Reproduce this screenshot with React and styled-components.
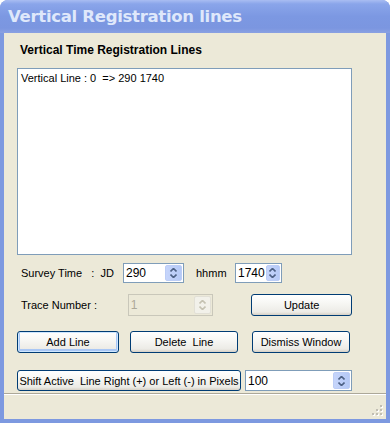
import React from "react";
import styled, { createGlobalStyle } from "styled-components";

const GlobalStyle = createGlobalStyle`
  html, body {
    margin: 0;
    padding: 0;
    background: #ffffff;
  }
  body {
    font-family: "Liberation Sans", Arial, sans-serif;
    font-size: 11px;
    color: #000;
  }
`;

const Window = styled.div`
  width: 390px;
  height: 423px;
  box-sizing: border-box;
  display: flex;
  flex-direction: column;
  background: #7d99e0;
  border-radius: 8px 8px 0 0;
  overflow: hidden;
`;

const TitleBar = styled.div`
  height: 33px;
  flex: none;
  display: flex;
  align-items: center;
  padding-left: 8px;
  background: linear-gradient(to bottom, #a9bdf2 0%, #8aa5ea 12%, #7c98e2 50%, #7b96e0 85%, #8aa1e2 100%);
  color: #dfe8fb;
  font-family: "DejaVu Sans", Verdana, sans-serif;
  font-weight: bold;
  font-size: 16.5px;
  letter-spacing: -0.3px;
`;

const Frame = styled.div`
  flex: 1;
  display: flex;
  flex-direction: column;
  margin: 0 4px 4px 4px;
  background: #ece9d8;
`;

const Body = styled.div`
  flex: 1;
  display: flex;
  flex-direction: column;
  padding: 9px 34px 0 13px;
`;

const GroupLabel = styled.div`
  font-weight: bold;
  font-size: 12px;
  height: 20px;
  line-height: 14px;
  padding-left: 3px;
  margin-top: 1px;
`;

const ListBox = styled.div`
  box-sizing: border-box;
  height: 187px;
  background: #fff;
  border: 1px solid #7f9db9;
  padding: 3px 3px;
  margin-top: 5px;
  white-space: pre;
`;

const Row = styled.div`
  display: flex;
  align-items: center;
  margin-top: ${(p) => p.$top}px;
  height: ${(p) => p.$h || 22}px;
`;

const Label = styled.span`
  box-sizing: border-box;
  white-space: pre;
  padding-left: ${(p) => p.$pl || 0}px;
  width: ${(p) => (p.$w ? p.$w + "px" : "auto")};
`;

const Spin = styled.div`
  display: flex;
  align-items: stretch;
  box-sizing: border-box;
  width: ${(p) => p.$w}px;
  height: ${(p) => p.$h || 20}px;
  margin-left: ${(p) => p.$ml || 0}px;
  background: ${(p) => (p.$disabled ? "#ece9d8" : "#fff")};
  border: 1px solid ${(p) => (p.$disabled ? "#c9c7ba" : "#7f9db9")};
`;

const SpinText = styled.div`
  flex: 1;
  display: flex;
  align-items: center;
  padding-left: 2px;
  font-size: 12px;
  color: ${(p) => (p.$disabled ? "#aca899" : "#000")};
`;

const SpinButtons = styled.div`
  width: 15px;
  margin: 1px;
  display: flex;
  flex-direction: column;
  border-radius: 2px;
  background: ${(p) => (p.$disabled ? "#f2f1ea" : "linear-gradient(to right, #c6d5fb, #b5c9f6)")};
  border: 1px solid ${(p) => (p.$disabled ? "#e2e0d6" : "#bccdf6")};
  align-items: center;
  justify-content: center;
  gap: 2px;
`;

const Arrow = ({ up, color }) => (
  <svg width="7" height="4" viewBox="0 0 7 4">
    <path
      d={up ? "M0.5 3.5 L3.5 0.5 L6.5 3.5" : "M0.5 0.5 L3.5 3.5 L6.5 0.5"}
      fill="none"
      stroke={color}
      strokeWidth="1.6"
    />
  </svg>
);

const SpinBox = ({ value, w, h, ml, disabled }) => {
  const c = disabled ? "#c5c2b2" : "#4d6185";
  return (
    <Spin $w={w} $h={h} $ml={ml} $disabled={disabled}>
      <SpinText $disabled={disabled}>{value}</SpinText>
      <SpinButtons $disabled={disabled}>
        <Arrow up color={c} />
        <Arrow color={c} />
      </SpinButtons>
    </Spin>
  );
};

const Button = styled.button`
  box-sizing: border-box;
  width: ${(p) => p.$w}px;
  height: ${(p) => p.$h || 22}px;
  margin-left: ${(p) => p.$ml || 0}px;
  padding: 0;
  font-family: "Liberation Sans", Arial, sans-serif;
  font-size: 11px;
  color: #000;
  white-space: pre;
  border: 1px solid #003c74;
  border-radius: 3px;
  background: linear-gradient(to bottom, #ffffff 0%, #f7f7f4 40%, #ecebe6 85%, #d6d0c5 100%);
  box-shadow: ${(p) =>
    p.$default
      ? "inset 0 0 0 1px #cee7ff, inset 0 -1px 0 2px #a9c7f5"
      : "none"};
`;

const StatusBar = styled.div`
  height: 22px;
  flex: none;
  border-top: 1px solid #aca899;
  box-shadow: inset 0 1px 0 #fff;
  display: flex;
  justify-content: flex-end;
  align-items: flex-end;
  padding: 0 3px 3px 0;
  margin-top: auto;
`;

const Grip = () => (
  <svg width="11" height="11" viewBox="0 0 11 11">
    {[
      [8, 0], [4, 4], [8, 4], [0, 8], [4, 8], [8, 8],
    ].map(([x, y]) => (
      <g key={`${x}-${y}`}>
        <rect x={x + 1} y={y + 1} width="2" height="2" fill="#ffffff" />
        <rect x={x} y={y} width="2" height="2" fill="#c1beb3" />
      </g>
    ))}
  </svg>
);

export default function App() {
  return (
    <>
      <GlobalStyle />
      <Window>
        <TitleBar>Vertical Registration lines</TitleBar>
        <Frame>
          <Body>
            <GroupLabel>Vertical Time Registration Lines</GroupLabel>
            <ListBox>{"Vertical Line : 0  => 290 1740"}</ListBox>
            <Row $top={8} $h={20}>
              <Label $pl={4} $w={106}>{"Survey Time   :  JD"}</Label>
              <SpinBox value="290" w={61} />
              <Label $pl={12} $w={51}>hhmm</Label>
              <SpinBox value="1740" w={47} />
            </Row>
            <Row $top={10} $h={23}>
              <Label $pl={4} $w={111}>Trace Number :</Label>
              <SpinBox value="1" w={86} h={22} disabled />
              <Button $w={101} $ml={38}>Update</Button>
            </Row>
            <Row $top={15} $h={22}>
              <Button $w={102} $default>Add Line</Button>
              <Button $w={108} $ml={11}>{"Delete  Line"}</Button>
              <Button $w={98} $ml={14}>Dismiss Window</Button>
            </Row>
            <Row $top={17} $h={21}>
              <Button $w={224} $h={21}>{"Shift Active  Line Right (+) or Left (-) in Pixels"}</Button>
              <SpinBox value="100" w={107} h={21} ml={4} />
            </Row>
          </Body>
          <StatusBar>
            <Grip />
          </StatusBar>
        </Frame>
      </Window>
    </>
  );
}
